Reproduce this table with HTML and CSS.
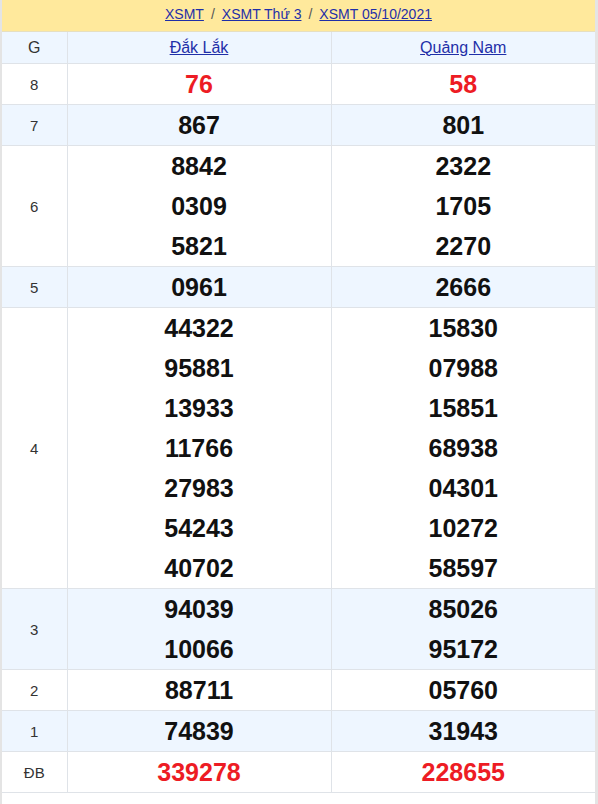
FILE: index.html
```html
<!DOCTYPE html>
<html lang="vi">
<head>
<meta charset="utf-8">
<title>XSMT 05/10/2021</title>
<link rel="stylesheet" href="styles.css">
</head>
<body>
<div class="wrap">
  <div class="crumbs">
    <a href="#">XSMT</a><span class="sep">/</span><a href="#">XSMT Thứ 3</a><span class="sep">/</span><a href="#">XSMT 05/10/2021</a>
  </div>
  <table class="kq">
    <colgroup><col class="c-g"><col class="c-p"><col class="c-p"></colgroup>
    <tr class="alt head"><td class="lbl">G</td><td><a href="#">Đắk Lắk</a></td><td><a href="#">Quảng Nam</a></td></tr>
    <tr><td class="lbl">8</td><td><div class="n red">76</div></td><td><div class="n red">58</div></td></tr>
    <tr class="alt"><td class="lbl">7</td><td><div class="n">867</div></td><td><div class="n">801</div></td></tr>
    <tr><td class="lbl">6</td><td><div class="n">8842</div><div class="n">0309</div><div class="n">5821</div></td><td><div class="n">2322</div><div class="n">1705</div><div class="n">2270</div></td></tr>
    <tr class="alt"><td class="lbl">5</td><td><div class="n">0961</div></td><td><div class="n">2666</div></td></tr>
    <tr><td class="lbl">4</td>
      <td><div class="n">44322</div><div class="n">95881</div><div class="n">13933</div><div class="n">11766</div><div class="n">27983</div><div class="n">54243</div><div class="n">40702</div></td>
      <td><div class="n">15830</div><div class="n">07988</div><div class="n">15851</div><div class="n">68938</div><div class="n">04301</div><div class="n">10272</div><div class="n">58597</div></td></tr>
    <tr class="alt"><td class="lbl">3</td><td><div class="n">94039</div><div class="n">10066</div></td><td><div class="n">85026</div><div class="n">95172</div></td></tr>
    <tr><td class="lbl">2</td><td><div class="n">88711</div></td><td><div class="n">05760</div></td></tr>
    <tr class="alt"><td class="lbl">1</td><td><div class="n">74839</div></td><td><div class="n">31943</div></td></tr>
    <tr><td class="lbl">ĐB</td><td><div class="n red">339278</div></td><td><div class="n red">228655</div></td></tr>
  </table>
</div>
</body>
</html>
```
FILE: styles.css
```css
html, body {
  margin: 0;
  padding: 0;
  background: #fff;
}
body {
  font-family: "Liberation Sans", Arial, sans-serif;
  color: #222;
}
.wrap {
  border-left: 2px solid #e4e4e4;
  border-right: 3px solid #e4e4e4;
  min-height: 804px;
  box-sizing: border-box;
}
.crumbs {
  background: #ffe99c;
  height: 32px;
  line-height: 29px;
  text-align: center;
  font-size: 14px;
  border-bottom: 1px solid #e6dfc0;
  box-sizing: border-box;
}
.crumbs a {
  color: #1f2fa8;
  text-decoration: underline;
}
.crumbs .sep {
  color: #555;
  margin: 0 7px;
}
.kq {
  width: 100%;
  border-collapse: collapse;
  table-layout: fixed;
  border-bottom: 1px solid #dfe3e8;
}
.c-g { width: 65px; }
.kq td {
  border: 1px solid #dfe3e8;
  padding: 0;
  text-align: center;
  vertical-align: middle;
}
.kq tr:first-child td { border-top: 0; }
.kq td:first-child { border-left: 0; }
.kq td:last-child { border-right: 0; }
.kq tr.alt td { background: #eef6ff; }
.kq tr.head td {
  height: 31px;
  font-size: 16px;
}
.kq tr.head a {
  color: #1f2fa8;
  text-decoration: underline;
}
.kq .lbl {
  font-size: 15px;
  color: #333;
}
.kq tr.head td.lbl { font-size: 16px; }
.n {
  height: 40px;
  line-height: 40px;
  font-size: 25px;
  font-weight: bold;
  color: #111;
}
.n.red { color: #ed1c24; }
```
